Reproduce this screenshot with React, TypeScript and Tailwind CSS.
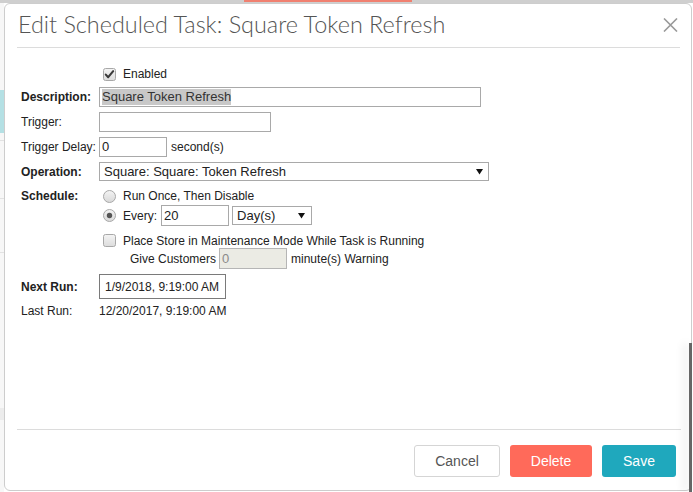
import React from "react";

const Chk = ({ checked }: { checked?: boolean }) => (
  <svg width="13" height="13" viewBox="0 0 13 13" className="shrink-0">
    <defs>
      <linearGradient id="cbg" x1="0" y1="0" x2="0" y2="1">
        <stop offset="0" stopColor="#f4f4f4" />
        <stop offset="1" stopColor="#dcdcdc" />
      </linearGradient>
    </defs>
    <rect x="0.5" y="0.5" width="12" height="12" rx="2" fill="url(#cbg)" stroke="#a8a8a8" />
    {checked && (
      <path d="M2.8 6.6 L5.2 9.2 L10.2 3.2" stroke="#3a3a3a" strokeWidth="2.1" fill="none" strokeLinecap="round" strokeLinejoin="round" />
    )}
  </svg>
);

const Radio = ({ checked }: { checked?: boolean }) => (
  <svg width="13" height="13" viewBox="0 0 13 13" className="shrink-0">
    <defs>
      <linearGradient id="rbg" x1="0" y1="0" x2="0" y2="1">
        <stop offset="0" stopColor="#f4f4f4" />
        <stop offset="1" stopColor="#d8d8d8" />
      </linearGradient>
    </defs>
    <circle cx="6.5" cy="6.5" r="6" fill="url(#rbg)" stroke="#a8a8a8" />
    {checked && <circle cx="6.5" cy="6.5" r="2.7" fill="#555" />}
  </svg>
);

const Arrow = () => (
  <svg width="7" height="6" viewBox="0 0 7 6" className="shrink-0">
    <path d="M0 0 H7 L3.5 5.5 Z" fill="#111" />
  </svg>
);

const Label = ({ children, bold }: { children?: React.ReactNode; bold?: boolean }) => (
  <div className={`w-[79px] shrink-0 pl-[1px] ${bold ? "font-bold" : ""}`}>{children}</div>
);

export default function App() {
  return (
    <div
      className="relative w-[693px] h-[492px] overflow-hidden bg-white text-[12px] text-[#222]"
      style={{ fontFamily: '"Liberation Sans", Arial, sans-serif' }}
    >
      {/* background page hints */}
      <div className="absolute left-0 top-0 w-[693px] h-[3px] bg-[#cfcfcf]" />
      <div className="absolute left-[244px] top-0 w-[168px] h-[2px] bg-[#f08070]" />
      <div className="absolute left-0 top-[3px] w-[4px] h-[489px] bg-[#f7f7f7]" />
      <div className="absolute left-0 top-[90px] w-[4px] h-[43px] bg-[#b4e0e4]" />
      <div className="absolute left-0 top-[140px] w-[4px] h-px bg-[#e2e2e2]" />
      <div className="absolute left-0 top-[198px] w-[4px] h-px bg-[#e2e2e2]" />
      <div className="absolute left-0 top-[252px] w-[4px] h-px bg-[#e2e2e2]" />
      <div className="absolute left-0 top-[408px] w-[4px] h-[12px] bg-[#ececec]" />

      {/* modal */}
      <div className="absolute left-[4px] top-[3px] w-[688px] h-[488px] bg-white border border-[#cdcdcd] rounded-[6px] flex flex-col">
        {/* header */}
        <div className="ml-[12px] mr-[11px] pt-[7px] pb-[10px] border-b border-[#dcdcdc] flex items-center justify-between">
          <div
            className="text-[23.4px] leading-[26px] font-light text-[#555] pl-[1px]"
            style={{ fontFamily: 'Lato, "Open Sans", sans-serif' }}
          >
            Edit Scheduled Task: Square Token Refresh
          </div>
          <svg width="15" height="14" viewBox="0 0 15 14" className="mr-[2px] mt-[2px]">
            <path d="M1 0.5 L14 13.5 M14 0.5 L1 13.5" stroke="#999" strokeWidth="1.6" />
          </svg>
        </div>

        {/* body */}
        <div className="h-[381px] pl-[15px] flex flex-col">
          {/* Enabled */}
          <div className="mt-[18px] h-[16px] flex items-center">
            <Label />
            <div className="flex items-center ml-[4px]">
              <Chk checked />
              <span className="ml-[7px]">Enabled</span>
            </div>
          </div>

          {/* Description */}
          <div className="mt-[5px] h-[20px] flex items-center">
            <Label bold>Description:</Label>
            <div className="w-[382px] h-[20px] border border-[#a9a9a9] pl-[2px] flex items-center text-[13px] text-[#333]">
              <span className="bg-[#c8c8c8] leading-[16px]">Square Token Refresh</span>
            </div>
          </div>

          {/* Trigger */}
          <div className="mt-[5px] h-[20px] flex items-center">
            <Label>Trigger:</Label>
            <div className="w-[172px] h-[20px] border border-[#a9a9a9]" />
          </div>

          {/* Trigger Delay */}
          <div className="mt-[5px] h-[20px] flex items-center">
            <Label>Trigger Delay:</Label>
            <div className="w-[68px] h-[20px] border border-[#a9a9a9] pl-[2px] flex items-center text-[13px]">0</div>
            <span className="ml-[4px]">second(s)</span>
          </div>

          {/* Operation */}
          <div className="mt-[5px] h-[19px] flex items-center">
            <Label bold>Operation:</Label>
            <div className="w-[390px] h-[19px] border border-[#a9a9a9] pl-[4px] pr-[5px] flex items-center justify-between text-[13px]">
              <span>Square: Square: Token Refresh</span>
              <Arrow />
            </div>
          </div>

          {/* Schedule radio 1 */}
          <div className="mt-[8px] h-[14px] flex items-center">
            <Label bold>Schedule:</Label>
            <div className="flex items-center ml-[4px]">
              <Radio />
              <span className="ml-[7px]">Run Once, Then Disable</span>
            </div>
          </div>

          {/* radio 2 */}
          <div className="mt-[2px] h-[21px] flex items-center">
            <Label />
            <div className="flex items-center ml-[4px]">
              <Radio checked />
              <span className="ml-[7px]">Every:</span>
              <div className="ml-[4px] w-[68px] h-[21px] border border-[#a9a9a9] pl-[2px] flex items-center text-[13px]">20</div>
              <div className="ml-[3px] w-[80px] h-[19px] border border-[#a9a9a9] pl-[4px] pr-[6px] flex items-center justify-between text-[13px]">
                <span>Day(s)</span>
                <Arrow />
              </div>
            </div>
          </div>

          {/* maintenance checkbox */}
          <div className="mt-[8px] h-[13px] flex items-center">
            <Label />
            <div className="flex items-center ml-[4px]">
              <Chk />
              <span className="ml-[7px]">Place Store in Maintenance Mode While Task is Running</span>
            </div>
          </div>

          {/* Give customers */}
          <div className="mt-[1px] h-[21px] flex items-center">
            <Label />
            <div className="flex items-center ml-[31px]">
              <span>Give Customers</span>
              <div className="ml-[3px] w-[68px] h-[21px] border border-[#b5b5b5] bg-[#ebebe4] pl-[2px] flex items-center text-[13px] text-[#8a8a8a]">0</div>
              <span className="ml-[4px]">minute(s) Warning</span>
            </div>
          </div>

          {/* Next Run */}
          <div className="mt-[5px] h-[25px] flex items-center">
            <Label bold>Next Run:</Label>
            <div className="w-[127px] h-[25px] border border-[#7a7a7a] pl-[5px] flex items-center">1/9/2018, 9:19:00 AM</div>
          </div>

          {/* Last Run */}
          <div className="mt-[4px] h-[16px] flex items-center">
            <Label>Last Run:</Label>
            <span>12/20/2017, 9:19:00 AM</span>
          </div>
        </div>

        {/* footer */}
        <div className="ml-[12px] mr-[10px] border-t border-[#dcdcdc] pt-[15px] flex justify-end gap-[10px] pr-[5px] text-[14px]">
          <div className="w-[86px] h-[32px] rounded-[3px] border border-[#d5d5d5] bg-white text-[#555] flex items-center justify-center">Cancel</div>
          <div className="w-[82px] h-[32px] rounded-[3px] bg-[#ff6a5a] text-white flex items-center justify-center">Delete</div>
          <div className="w-[74px] h-[32px] rounded-[3px] bg-[#1fa8bd] text-white flex items-center justify-center">Save</div>
        </div>
      </div>

      {/* right dark bar with shadow */}
      <div className="absolute left-[689px] top-[343px] w-[3px] h-[149px] bg-[#666] shadow-[-5px_0_8px_rgba(0,0,0,0.12)]" />
    </div>
  );
}
